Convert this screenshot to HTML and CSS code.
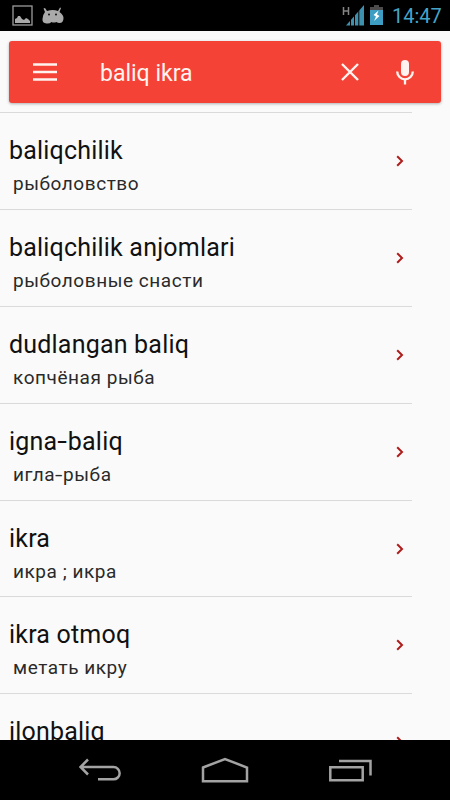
FILE: index.html
```
<!DOCTYPE html>
<html lang="uz">
<head>
    <meta charset="UTF-8">
    <title>baliq ikra</title>
    <link rel="stylesheet" href="styles.css">
</head>
<body>
    <div class="statusBar">
        <svg class="pictureIcon" width="22" height="22" viewBox="0 0 22 22">
            <rect x="1" y="1" width="19" height="19" fill="none" stroke="#9b9b9b" stroke-width="1.3"/>
            <path d="M3 18v-4l2-1 1-2h2l2 3 2 1 2-2 2 1 2 2v2z" fill="#aaa"/>
        </svg>
        <svg class="androidIcon" width="22" height="18" viewBox="0 0 22 18">
            <path d="M3 5L1.500 1.500 3 1l2 3q6-2 11 0l2-3.500 1 .5-1.500 4q4 3 4 6 0 5-4 5-2 0-3-1-3 1-5 0-2 2-5 1.500Q0 16 .5 12 .5 8 3 5z" fill="#aaa"/>
            <circle cx="7" cy="7.500" r="1" fill="#111"/>
            <circle cx="14" cy="7.500" r="1" fill="#111"/>
        </svg>
        <svg class="signalIcon" width="22" height="22" viewBox="0 0 22 22">
            <path d="M1.500 2v8M6.500 2v8M1.500 6h5" fill="none" stroke="#858585" stroke-width="1.500"/>
            <path d="M4 20.500L22 0v20.500z" fill="#3d91ae"/>
            <path d="M8.500 8v13M12.500 5v16M16.800 1v20" stroke="#000" stroke-width="1"/>
        </svg>
        <svg class="batteryIcon" width="13" height="20" viewBox="0 0 13 20">
            <path d="M4 0h5v2h4v4H0V2h4z" fill="#4c4c4c"/>
            <path d="M0 5h13v15H0z" fill="#3d9dc2"/>
            <path d="M8.500 5.500L3.500 10l2.500 1.500L4 16l5.500-5L7 9.500z" fill="#fff"/>
        </svg>
        <span class="clock">14:47</span>
    </div>

    <div class="content">
        <div class="searchBar">
            <svg class="menuIcon" width="24" height="18" viewBox="0 0 24 18">
                <path d="M0 1.500h24M0 9h24M0 16.500h24" stroke="#fff3f0" stroke-width="2.500"/>
            </svg>
            <span class="query">baliq ikra</span>
            <svg class="clearIcon" width="18" height="18" viewBox="0 0 18 18">
                <path d="M1 1l16 16M17 1L1 17" stroke="#fff3f0" stroke-width="2.400"/>
            </svg>
            <svg class="micIcon" width="18" height="25" viewBox="0 0 18 25">
                <rect x="5" y="0" width="8" height="16" rx="4" fill="#fff3f0"/>
                <path d="M1.200 11.500a7.800 7.800 0 0 0 15.600 0M9 19v5.500" fill="none" stroke="#fff3f0" stroke-width="2.300"/>
            </svg>
        </div>

        <div class="wordList">
            <div class="wordRow">
                <div class="words">
                    <div class="word">baliqchilik</div>
                    <div class="translation">рыболовство</div>
                </div>
                <svg class="arrow" width="8" height="12" viewBox="0 0 8 12"><path d="M1.200 1.200L6 6l-4.800 4.800"/></svg>
            </div>
            <div class="wordRow">
                <div class="words">
                    <div class="word">baliqchilik anjomlari</div>
                    <div class="translation">рыболовные снасти</div>
                </div>
                <svg class="arrow" width="8" height="12" viewBox="0 0 8 12"><path d="M1.200 1.200L6 6l-4.800 4.800"/></svg>
            </div>
            <div class="wordRow">
                <div class="words">
                    <div class="word">dudlangan baliq</div>
                    <div class="translation">копчёная рыба</div>
                </div>
                <svg class="arrow" width="8" height="12" viewBox="0 0 8 12"><path d="M1.200 1.200L6 6l-4.800 4.800"/></svg>
            </div>
            <div class="wordRow">
                <div class="words">
                    <div class="word">igna<span class="hyphen">-</span>baliq</div>
                    <div class="translation">игла<span class="hyphen">-</span>рыба</div>
                </div>
                <svg class="arrow" width="8" height="12" viewBox="0 0 8 12"><path d="M1.200 1.200L6 6l-4.800 4.800"/></svg>
            </div>
            <div class="wordRow">
                <div class="words">
                    <div class="word">ikra</div>
                    <div class="translation">икра ; икра</div>
                </div>
                <svg class="arrow" width="8" height="12" viewBox="0 0 8 12"><path d="M1.200 1.200L6 6l-4.800 4.800"/></svg>
            </div>
            <div class="wordRow">
                <div class="words">
                    <div class="word">ikra otmoq</div>
                    <div class="translation">метать икру</div>
                </div>
                <svg class="arrow" width="8" height="12" viewBox="0 0 8 12"><path d="M1.200 1.200L6 6l-4.800 4.800"/></svg>
            </div>
            <div class="wordRow">
                <div class="words">
                    <div class="word">ilonbaliq</div>
                </div>
                <svg class="arrow" width="8" height="12" viewBox="0 0 8 12"><path d="M1.200 1.200L6 6l-4.800 4.800"/></svg>
            </div>
        </div>
    </div>

    <div class="navBar">
        <svg width="42" height="24" viewBox="0 0 42 24">
            <path d="M9 1.500L1.500 9 9 16.500M2 9h32.500a6 6 0 0 1 0 12.300H19"/>
        </svg>
        <svg width="48" height="26" viewBox="0 0 48 26">
            <path d="M2 10.500L24 2l22 8.500v13.800H2z"/>
        </svg>
        <svg width="43" height="23" viewBox="0 0 43 23">
            <path d="M1.300 8.300h32.400v12.900H1.300zM10 2h31.500v14.500"/>
        </svg>
    </div>
</body>
</html>
```

FILE: styles.css
```
body {
    font-family: Roboto, "Noto Sans", sans-serif;
    background-color: #fafafa;
    margin: 0;
    height: 800px;
    display: flex;
    flex-direction: column;
    overflow: hidden;
}

/* Status bar */
.statusBar {
    height: 31px;
    flex: none;
    box-sizing: border-box;
    background-color: #000;
    display: flex;
    align-items: flex-start;
    padding: 5px 8px 0 12px;
}

.androidIcon {
    margin: 2px 0 0 8px;
}

.signalIcon {
    margin-left: auto;
}

.batteryIcon {
    margin: 0 9px 0 6px;
}

.clock {
    color: #45a5c9;
    font-size: 20px;
    line-height: 22px;
    width: 50px;
    white-space: nowrap;
}

/* Search */
.content {
    flex: 1;
    min-height: 0;
    overflow: hidden;
}

.searchBar {
    height: 62px;
    margin: 10px 9px 9px;
    background-color: #f44336;
    border-radius: 3px;
    box-shadow: 0 1px 3px rgba(0, 0, 0, 0.3);
    display: flex;
    align-items: center;
    padding: 0 27px 0 24px;
    box-sizing: border-box;
}

.query {
    color: #fff3f0;
    font-size: 23px;
    margin-left: 43px;
    padding-top: 2px;
}

.clearIcon {
    margin-left: auto;
}

.micIcon {
    margin-left: 37px;
}

/* Word list */
.wordList {
    width: 412px;
    border-top: 1px solid #dadada;
}

.wordRow {
    height: 96.9px;
    box-sizing: border-box;
    border-bottom: 1px solid #dadada;
    display: flex;
    justify-content: space-between;
    padding: 22px 8px 0 9px;
}

.word {
    color: #111;
    font-size: 25px;
    line-height: 30px;
    letter-spacing: 0.2px;
    padding-top: 1px;
}

.translation {
    color: #2a2a2a;
    font-size: 19px;
    line-height: 24px;
    margin: 6px 0 0 4px;
    letter-spacing: 0.55px;
}

.hyphen {
    display: inline-block;
    text-align: center;
    width: 0.42em;
    transform: scaleX(1.4);
}

.arrow {
    margin-top: 20px;
}

.arrow path {
    fill: none;
    stroke: #b01c1c;
    stroke-width: 2;
}

/* Navigation bar */
.navBar {
    height: 60px;
    flex: none;
    box-sizing: border-box;
    background-color: #000;
    display: flex;
    justify-content: space-between;
    align-items: center;
    padding: 0 78px 0 79px;
}

.navBar path {
    fill: none;
    stroke: #a3a3a3;
    stroke-width: 2.5;
}
```
